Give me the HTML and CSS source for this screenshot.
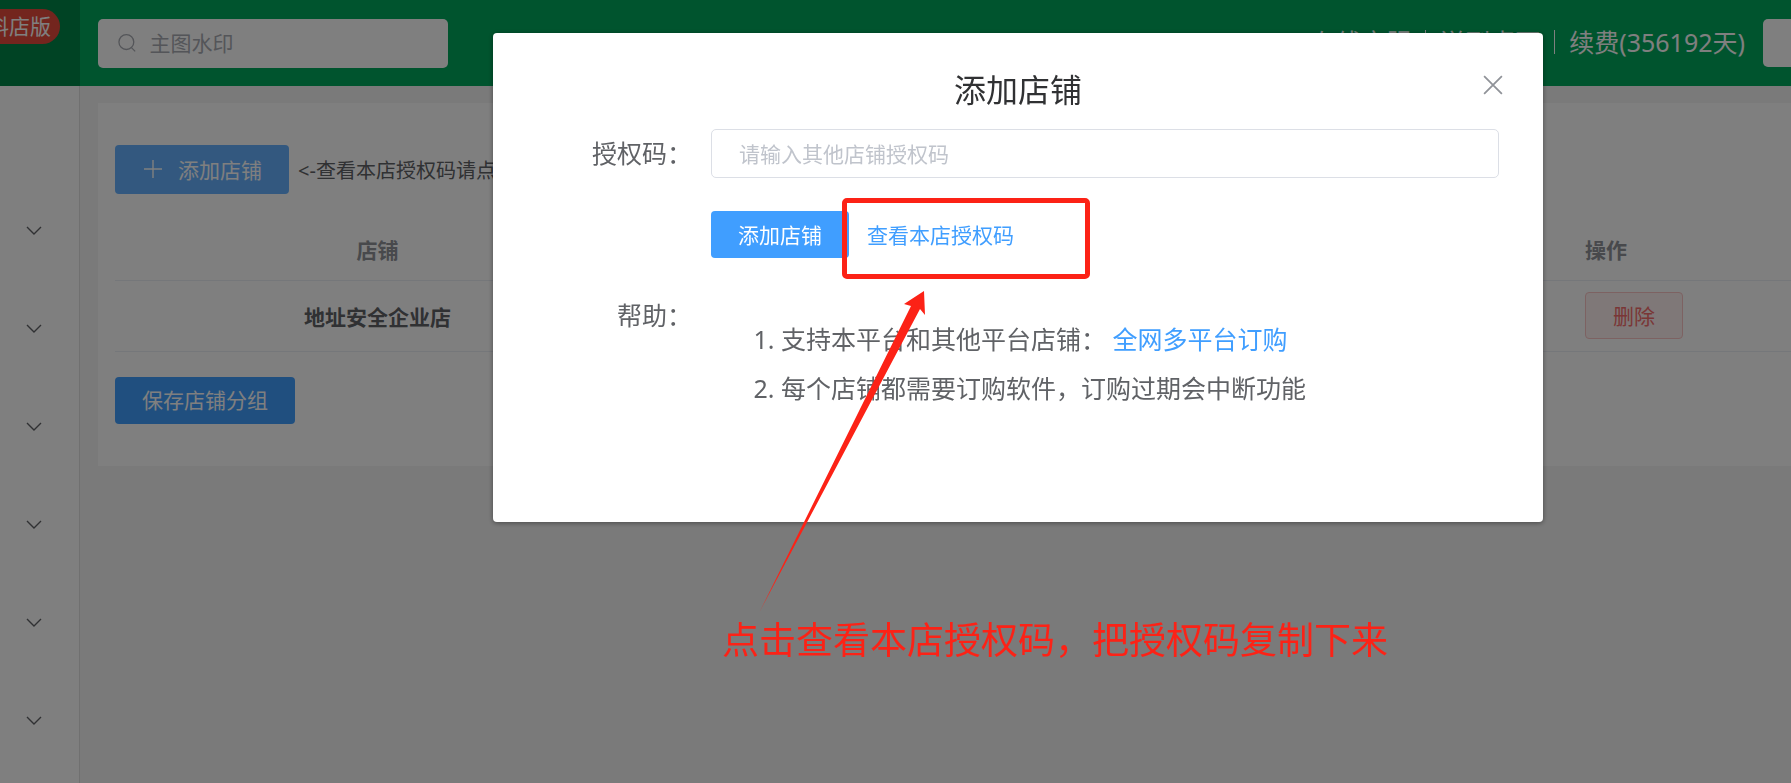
FILE: index.html
```html
<!DOCTYPE html>
<html lang="zh-CN">
<head>
  <meta charset="UTF-8">
  <title>添加店铺</title>
  <link rel="stylesheet" href="styles.css">
</head>

<body>

  <div class="layout">
    <aside class="sidebar">
      <div class="logo"><span class="version">料店版</span></div>
      <nav class="menu">
        <button class="menu-item" aria-label="展开菜单一"><svg viewBox="0 0 16 10"><path d="M1 1l7 7 7-7"/></svg></button>
        <button class="menu-item" aria-label="展开菜单二"><svg viewBox="0 0 16 10"><path d="M1 1l7 7 7-7"/></svg></button>
        <button class="menu-item" aria-label="展开菜单三"><svg viewBox="0 0 16 10"><path d="M1 1l7 7 7-7"/></svg></button>
        <button class="menu-item" aria-label="展开菜单四"><svg viewBox="0 0 16 10"><path d="M1 1l7 7 7-7"/></svg></button>
        <button class="menu-item" aria-label="展开菜单五"><svg viewBox="0 0 16 10"><path d="M1 1l7 7 7-7"/></svg></button>
        <button class="menu-item" aria-label="展开菜单六"><svg viewBox="0 0 16 10"><path d="M1 1l7 7 7-7"/></svg></button>
      </nav>
    </aside>

    <div class="page">
      <header class="topbar">
        <label class="search">
          <svg viewBox="0 0 20 20"><circle cx="9" cy="9" r="8"/><path d="M14.5 15l4 4"/></svg>
          <input type="text" placeholder="主图水印" aria-label="搜索">
        </label>
        <div class="links">
          <a href="#">在线客服</a>
          <a href="#">送到桌面</a>
          <a href="#">续费(356192天)</a>
        </div>
        <button class="account" aria-label="账号"></button>
      </header>

      <main class="card">
        <div class="toolbar">
          <button class="btn btn-add">
            <svg viewBox="0 0 18 18"><path d="M9 0v18M0 9h18"/></svg>添加店铺
          </button>
          <span class="tip">&lt;-查看本店授权码请点击</span>
        </div>
        <table class="shops">
          <thead>
            <tr><th>店铺</th><th></th><th class="action">操作</th></tr>
          </thead>
          <tbody>
            <tr>
              <td class="name">地址安全企业店</td>
              <td></td>
              <td class="action"><button class="btn btn-danger">删除</button></td>
            </tr>
          </tbody>
        </table>
        <button class="btn">保存店铺分组</button>
      </main>
    </div>
  </div>

  <!-- 弹窗 -->
  <div class="mask">
    <div class="dialog" role="dialog" aria-labelledby="dialog-title">
      <h2 id="dialog-title">添加店铺</h2>
      <button class="close" aria-label="关闭"><svg viewBox="0 0 18 18"><path d="M1 1l16 16M17 1L1 17"/></svg></button>

      <form class="form">
        <label class="label" for="code">授权码：</label>
        <input id="code" class="input" type="text" placeholder="请输入其他店铺授权码">

        <div class="buttons">
          <button type="button" class="btn">添加店铺</button>
          <a href="#" class="view-code">查看本店授权码</a>
        </div>

        <div class="label help">帮助：</div>
        <ol>
          <li>支持本平台和其他平台店铺： <a href="#">全网多平台订购</a></li>
          <li>每个店铺都需要订购软件，订购过期会中断功能</li>
        </ol>
      </form>

      <!-- 操作指引 -->
      <div class="guide-box"></div>
      <svg class="guide-arrow" viewBox="0 0 168 322">
        <path d="M0 322L152 15 145 13 165 0 166 24 161 18Z"/>
      </svg>
      <p class="guide-text">点击查看本店授权码，把授权码复制下来</p>
    </div>
  </div>

</body>
</html>
```

FILE: styles.css
```css
* {
  margin: 0;
  padding: 0;
  box-sizing: border-box;
}

body {
  font-family: "Noto Sans", "Noto Sans CJK SC", sans-serif;
  color: #606266;
  background: #f4f4f4;
  overflow: hidden;
}

button,
input {
  font: inherit;
}

button {
  cursor: pointer;
}

a {
  color: #409eff;
  text-decoration: none;
}

svg {
  fill: none;
  stroke: currentColor;
}

.layout {
  display: flex;
  min-height: 100vh;
}

/* 左侧菜单 */
.sidebar {
  width: 80px;
  flex-shrink: 0;
  background: #fff;
  border-right: 1px solid #e0e0e0;
}

.logo {
  display: flex;
  justify-content: flex-end;
  align-items: flex-start;
  height: 86px;
  margin-right: -1px;
  padding: 9px 20px 0 0;
  background: #008648;
  overflow: hidden;
}

.version {
  flex-shrink: 0;
  padding: 0 9px 0 16px;
  font-size: 21px;
  line-height: 35px;
  color: #fff;
  background: #e64a3c;
  border-radius: 18px;
}

.menu {
  display: flex;
  flex-direction: column;
  padding-top: 96px;
}

.menu-item {
  height: 98px;
  padding-left: 26px;
  border: none;
  background: none;
  color: #606266;
  text-align: left;
}

.menu-item svg {
  display: block;
  width: 16px;
  height: 10px;
  stroke-width: 1.4;
}

/* 顶部 */
.page {
  flex: 1;
  min-width: 0;
}

.topbar {
  display: flex;
  align-items: center;
  height: 86px;
  padding-left: 18px;
  background: #00a85c;
}

.search {
  display: flex;
  align-items: center;
  gap: 13px;
  width: 350px;
  height: 49px;
  padding: 0 20px;
  background: #fff;
  border-radius: 5px;
  color: #c0c4cc;
}

.search svg {
  width: 20px;
  height: 20px;
  stroke: #a8abb2;
  stroke-width: 1.4;
}

.search input {
  min-width: 0;
  border: none;
  outline: none;
  font-size: 21px;
}

input::placeholder {
  color: #c0c4cc;
  opacity: 1;
}

.search input::placeholder {
  color: #a8abb2;
}

.links {
  display: flex;
  align-items: center;
  margin-left: auto;
  padding-bottom: 3px;
}

.links a {
  padding: 0 14px;
  font-size: 25px;
  line-height: 24px;
  color: #fff;
}

.links a + a {
  border-left: 1px solid #fff;
}

.account {
  width: 28px;
  height: 48px;
  margin-left: 4px;
  border: none;
  border-radius: 5px 0 0 5px;
  background: #fff;
}

/* 内容 */
.card {
  margin: 17px 0 0 18px;
  padding: 42px 0 42px 17px;
  background: #fff;
}

.toolbar {
  display: flex;
  align-items: center;
  gap: 9px;
}

.btn {
  height: 47px;
  padding: 0 27px 2px;
  border: none;
  border-radius: 4px;
  font-size: 21px;
  color: #fff;
  background: #409eff;
}

.btn-add {
  display: flex;
  align-items: center;
  gap: 16px;
  height: 49px;
  padding: 0 27px 2px 29px;
  background: #66b1ff;
}

.btn-add svg {
  width: 18px;
  height: 18px;
  stroke-width: 1.4;
}

.tip {
  font-size: 20px;
}

.shops {
  width: 100%;
  margin: 25px 0;
  border-collapse: collapse;
  table-layout: fixed;
  font-size: 21px;
}

.shops th,
.shops td {
  height: 71px;
  border-bottom: 1px solid #ebeef5;
  text-align: center;
}

.shops th {
  height: 61px;
  color: #909399;
  font-weight: 700;
}

.shops th:first-child {
  width: 525px;
}

.shops .name {
  font-weight: 700;
}

.shops .action {
  width: 206px;
  text-align: left;
}

.btn-danger {
  color: #f56c6c;
  background: #fef0f0;
  border: 1px solid #fbc4c4;
}

/* 弹窗 */
.mask {
  position: fixed;
  inset: 0;
  padding: 33px 248px 0 493px;
  background: rgba(0, 0, 0, 0.5);
}

.dialog {
  position: relative;
  min-height: 489px;
  padding: 32px 44px 0 84px;
  background: #fff;
  border-radius: 4px;
  box-shadow: 0 1px 5px rgba(0, 0, 0, 0.4);
}

.dialog h2 {
  margin-right: 40px;
  font-size: 32px;
  line-height: 50px;
  font-weight: 400;
  text-align: center;
  color: #303133;
}

.close {
  position: absolute;
  top: 42px;
  right: 40px;
  width: 20px;
  height: 20px;
  border: none;
  background: none;
  color: #909399;
}

.close svg {
  display: block;
  width: 20px;
  height: 20px;
  stroke-width: 1.6;
}

.form {
  display: grid;
  grid-template-columns: 119px 1fr;
  padding: 14px 0 0 15px;
}

.label {
  font-size: 25px;
  line-height: 49px;
  white-space: nowrap;
}

.help {
  padding-left: 25px;
}

.input {
  width: 100%;
  height: 49px;
  padding: 0 27px;
  border: 1px solid #dcdfe6;
  border-radius: 5px;
  font-size: 21px;
}

.buttons {
  grid-column: 2;
  display: flex;
  align-items: center;
  gap: 18px;
  padding: 33px 0;
}

.view-code {
  padding-bottom: 2px;
  font-size: 21px;
}

.form ol {
  padding: 24px 0 0 70px;
  font-size: 25px;
  line-height: 49px;
}

/* 操作指引 */
.guide-box {
  position: absolute;
  top: 165px;
  left: 349px;
  width: 248px;
  height: 81px;
  border: 5px solid #fc2216;
  border-radius: 5px;
}

.guide-arrow {
  position: absolute;
  top: 258px;
  left: 266px;
  width: 168px;
  height: 322px;
  fill: #fc2216;
  stroke: none;
}

.guide-text {
  position: absolute;
  top: 580px;
  left: 229px;
  font-size: 37px;
  line-height: 54px;
  color: #fc2216;
  white-space: nowrap;
}
```
